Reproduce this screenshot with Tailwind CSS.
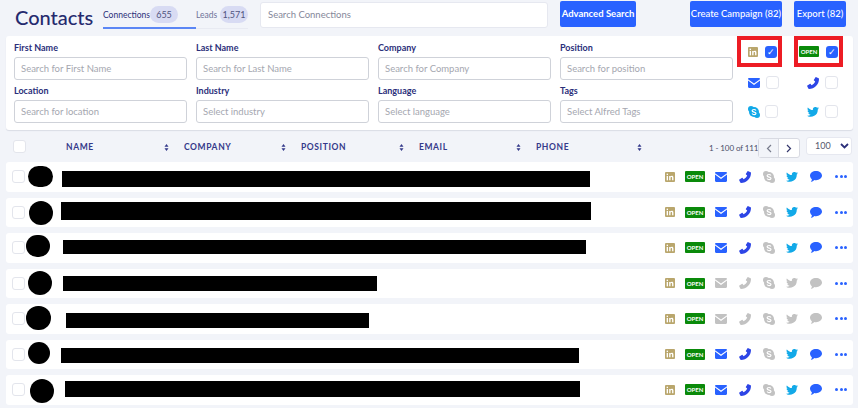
<!DOCTYPE html>
<html lang="en">
<head>
<meta charset="utf-8">
<script src="https://cdn.jsdelivr.net/npm/@tailwindcss/browser@4"></script>
<title>Contacts</title>
</head>
<body class="bg-[#f2f4f9] w-[858px] h-[408px] overflow-hidden font-['Lato',sans-serif] text-[#2b2f7a]">
<svg width="0" height="0" class="absolute">
  <defs>
    <symbol id="li" viewBox="0 0 12 12"><rect width="12" height="12" rx="1.2" fill="#b9a66c"/><rect x="2" y="4.7" width="1.6" height="5.3" fill="#fff"/><rect x="2" y="2" width="1.6" height="1.6" fill="#fff"/><path d="M5 4.7h1.5v.8c.4-.6 1-.9 1.7-.9 1.3 0 1.9.8 1.9 2.2V10H8.500V7.100c0-.7-.2-1.200-.9-1.200s-1 .5-1 1.200V10H5z" fill="#fff"/></symbol>
    <symbol id="mail" viewBox="0 0 12 10"><path d="M0 1.200C0 .5.500 0 1.200 0h9.600c.7 0 1.200.5 1.200 1.200L6 5.400z" fill="currentColor"/><path d="M0 2.600l6 4.300 6-4.300v6.200c0 .7-.5 1.200-1.200 1.200H1.200C.5 10 0 9.500 0 8.800z" fill="currentColor"/></symbol>
    <symbol id="phone" viewBox="0 0 12 12"><path d="M9.300.2l2.300 1.100c.3.2.4.4.4.7C12 7.500 7.500 12 2 12c-.3 0-.6-.1-.7-.4L.2 9.300c-.2-.4-.1-.7.2-.9l2.400-1.500c.3-.2.600-.1.800.1l1 1.200c1.600-.8 2.800-2.100 3.600-3.700l-1.200-1c-.2-.2-.3-.5-.1-.8L8.400.4c.2-.3.6-.4.9-.2z" fill="currentColor"/></symbol>
    <symbol id="skype" viewBox="0 0 12 12"><circle cx="6" cy="6" r="5" fill="currentColor"/><circle cx="3" cy="3" r="3" fill="currentColor"/><circle cx="9" cy="9" r="3" fill="currentColor"/><path d="M8 4.500C7.500 3.800 6.800 3.500 6 3.500c-1.100 0-1.900.5-1.900 1.300C4.100 6.500 8 5.600 8 7.300c0 .8-.8 1.300-1.900 1.300-.9 0-1.600-.4-2.100-1.100" fill="none" stroke="#fff" stroke-width="1.200"/></symbol>
    <symbol id="tw" viewBox="0 0 24 20"><path d="M24 2.400c-.9.400-1.800.7-2.800.8 1-.6 1.800-1.600 2.200-2.700-1 .6-2 1-3.100 1.200A4.900 4.900 0 0 0 11.900 6.200C7.800 6 4.200 4 1.700.9c-1.300 2.300-.6 5.100 1.500 6.600-.8 0-1.600-.2-2.200-.6 0 2.300 1.700 4.400 3.900 4.900-.7.200-1.500.2-2.200.1.600 2 2.400 3.400 4.600 3.400A9.900 9.900 0 0 1 0 17.300 13.900 13.900 0 0 0 21.500 5c1-.7 1.800-1.600 2.500-2.600z" fill="currentColor"/></symbol>
    <symbol id="chat" viewBox="0 0 12 11"><path d="M6 0c3.300 0 6 2 6 4.600S9.300 9.200 6 9.200c-.6 0-1.100-.1-1.600-.2C3.500 9.800 2.300 10.600.8 11c.6-.8 1-1.700 1.100-2.700C.7 7.400 0 6.100 0 4.600 0 2 2.700 0 6 0z" fill="currentColor"/></symbol>
    <symbol id="sort" viewBox="0 0 6 9"><path d="M3 0l2.600 3.500H.4zM3 9L.4 5.500h5.200z" fill="currentColor"/></symbol>
  </defs>
</svg>

<!-- Top bar -->
<header class="flex h-[36px] items-start">
  <h1 class="ml-[15px] mt-[3px] w-[88px] text-[20px] leading-[28px] font-medium text-[#252a6e]">Contacts</h1>
  <nav class="flex w-[145px] h-[29px] border-b border-[#e8eaf2]">
    <a class="mt-[6px] flex h-[23px] w-[93px] items-start border-b-2 border-[#5b86f5] text-[8.500px] text-[#2b2f7a]"><span class="w-[47px] whitespace-nowrap leading-[19px]">Connections</span><span class="flex h-[17px] w-[28px] items-center justify-center rounded-full bg-[#d8dbf3] text-[9px] text-[#50547f]">655</span></a>
    <a class="mt-[6px] flex h-[17px] items-start text-[8.500px] text-[#6f739a]"><span class="w-[24px] leading-[19px]">Leads</span><span class="flex h-[17px] w-[28px] items-center justify-center rounded-full bg-[#d8dbf3] text-[9px] text-[#50547f]">1,571</span></a>
  </nav>
  <div class="ml-[12px] mt-[2px] flex h-[26px] w-[288px] items-center rounded-[3px] border border-[#e6e8f0] bg-white pl-[7px] text-[9.500px] text-[#85889a]">Search Connections</div>
  <button class="ml-[12px] mt-[1px] h-[26px] w-[76px] whitespace-nowrap rounded-[2px] bg-[#2962ff] text-[9.500px] font-bold text-white">Advanced Search</button>
  <button class="ml-[54px] mt-[1px] h-[26px] w-[92px] whitespace-nowrap rounded-[2px] bg-[#2962ff] text-[9.500px] font-medium text-white">Create Campaign (82)</button>
  <button class="ml-[12px] mt-[1px] h-[26px] w-[52px] whitespace-nowrap rounded-[2px] bg-[#2962ff] text-[9.500px] font-medium text-white">Export (82)</button>
</header>

<!-- Filters -->
<section class="mx-[6px] flex h-[94px] w-[847px] rounded-[3px] bg-white shadow-[0_1px_1px_rgba(40,50,90,0.12)]">
  <div class="ml-[8px] mt-[5px] grid w-[719px] grid-cols-[173px_173px_173px_173px] content-start gap-x-[9px] gap-y-[4px]">
    <label class="block text-[9px] font-bold leading-[14px]">First Name<span class="mt-[2px] flex h-[23px] items-center rounded-[3px] border border-[#cfd2d9] pl-[6px] text-[9.500px] font-normal text-[#a5a7b0]">Search for First Name</span></label>
    <label class="block text-[9px] font-bold leading-[14px]">Last Name<span class="mt-[2px] flex h-[23px] items-center rounded-[3px] border border-[#cfd2d9] pl-[6px] text-[9.500px] font-normal text-[#a5a7b0]">Search for Last Name</span></label>
    <label class="block text-[9px] font-bold leading-[14px]">Company<span class="mt-[2px] flex h-[23px] items-center rounded-[3px] border border-[#cfd2d9] pl-[6px] text-[9.500px] font-normal text-[#a5a7b0]">Search for Company</span></label>
    <label class="block text-[9px] font-bold leading-[14px]">Position<span class="mt-[2px] flex h-[23px] items-center rounded-[3px] border border-[#cfd2d9] pl-[6px] text-[9.500px] font-normal text-[#a5a7b0]">Search for position</span></label>
    <label class="block text-[9px] font-bold leading-[14px]">Location<span class="mt-[2px] flex h-[23px] items-center rounded-[3px] border border-[#cfd2d9] pl-[6px] text-[9.500px] font-normal text-[#a5a7b0]">Search for location</span></label>
    <label class="block text-[9px] font-bold leading-[14px]">Industry<span class="mt-[2px] flex h-[23px] items-center rounded-[3px] border border-[#cfd2d9] pl-[6px] text-[9.500px] font-normal text-[#a5a7b0]">Select industry</span></label>
    <label class="block text-[9px] font-bold leading-[14px]">Language<span class="mt-[2px] flex h-[23px] items-center rounded-[3px] border border-[#cfd2d9] pl-[6px] text-[9.500px] font-normal text-[#a5a7b0]">Select language</span></label>
    <label class="block text-[9px] font-bold leading-[14px]">Tags<span class="mt-[2px] flex h-[23px] items-center rounded-[3px] border border-[#cfd2d9] pl-[6px] text-[9.500px] font-normal text-[#a5a7b0]">Select Alfred Tags</span></label>
  </div>
  <div class="ml-[4px] w-[106px]">
    <div class="flex h-[31px] gap-[12px]">
      <div class="flex h-[31px] w-[45px] items-center border-[4px] border-[#ed1c24] pl-[7px]">
        <svg class="h-[10px] w-[10px]"><use href="#li"/></svg>
        <span class="ml-[7px] flex h-[12px] w-[12px] items-center justify-center rounded-[3px] bg-[#2962ff] text-[9px] leading-none text-white">✓</span>
      </div>
      <div class="flex h-[31px] w-[49px] items-center border-[4px] border-[#ed1c24] pl-[1px]">
        <span class="flex h-[11px] w-[20px] items-center justify-center rounded-[1px] bg-[#0a8a0a] text-[6px] font-bold leading-[11px] text-white">OPEN</span>
        <span class="ml-[7px] flex h-[12px] w-[12px] items-center justify-center rounded-[3px] bg-[#2962ff] text-[9px] leading-none text-white">✓</span>
      </div>
    </div>
    <div class="mt-[9px] flex h-[13px] items-center">
      <svg class="ml-[11px] h-[10px] w-[12px] text-[#2962ff]"><use href="#mail"/></svg>
      <span class="ml-[6px] h-[13px] w-[13px] rounded-[3px] border border-[#e3e5ec]"></span>
      <svg class="ml-[28px] h-[12px] w-[12px] text-[#2d45e6]"><use href="#phone"/></svg>
      <span class="ml-[6px] h-[13px] w-[13px] rounded-[3px] border border-[#e3e5ec]"></span>
    </div>
    <div class="mt-[16px] flex h-[13px] items-center">
      <svg class="ml-[11px] h-[12px] w-[12px] text-[#12a9e8]"><use href="#skype"/></svg>
      <span class="ml-[5px] h-[13px] w-[13px] rounded-[3px] border border-[#e3e5ec]"></span>
      <svg class="ml-[29px] h-[10px] w-[12px] text-[#12a9e8]"><use href="#tw"/></svg>
      <span class="ml-[6px] h-[13px] w-[13px] rounded-[3px] border border-[#e3e5ec]"></span>
    </div>
  </div>
</section>

<!-- Table head -->
<div class="relative flex h-[32px] items-center text-[8.500px] font-bold tracking-[0.6px] text-[#34398a]">
  <span class="ml-[13px] h-[13px] w-[13px] rounded-[3px] border border-[#e3e5ec] bg-white"></span>
  <div class="ml-[40px] mt-[3px] flex w-[118px] items-center justify-between pr-[15px]"><span>NAME</span><svg class="h-[7px] w-[5px]"><use href="#sort"/></svg></div>
  <div class="mt-[3px] flex w-[117px] items-center justify-between pr-[15px]"><span>COMPANY</span><svg class="h-[7px] w-[5px]"><use href="#sort"/></svg></div>
  <div class="mt-[3px] flex w-[118px] items-center justify-between pr-[15px]"><span>POSITION</span><svg class="h-[7px] w-[5px]"><use href="#sort"/></svg></div>
  <div class="mt-[3px] flex w-[117px] items-center justify-between pr-[15px]"><span>EMAIL</span><svg class="h-[7px] w-[5px]"><use href="#sort"/></svg></div>
  <div class="mt-[3px] flex w-[106px] items-center justify-between"><span>PHONE</span><svg class="h-[7px] w-[5px]"><use href="#sort"/></svg></div>
  <span class="ml-[67px] mt-[3px] w-[49px] whitespace-nowrap text-[8px] font-normal tracking-[-0.1px] text-[#4a4d68]">1 - 100 of 111</span>
  <div class="mt-[4px] flex h-[20px] w-[42px] rounded-[3px] border border-[#d8dae2] bg-white">
    <span class="flex w-1/2 items-center justify-center border-r border-[#d8dae2] bg-[#f2f4f9]"><svg class="h-[9px] w-[6px]" viewBox="0 0 6 9" fill="none" stroke="#777b8c" stroke-width="1.2"><path d="M5 1L1.500 4.500 5 8"/></svg></span>
    <span class="flex w-1/2 items-center justify-center"><svg class="h-[9px] w-[6px]" viewBox="0 0 6 9" fill="none" stroke="#33366b" stroke-width="1.2"><path d="M1 1l3.500 3.500L1 8"/></svg></span>
  </div>
  <div class="ml-[6px] flex h-[18px] w-[46px] items-center justify-between rounded-[3px] border border-[#e6e8f0] bg-white pl-[8px] pr-[2px] text-[9px] font-normal tracking-normal text-[#55586e]">100<svg class="h-[6px] w-[9px]" viewBox="0 0 9 6" fill="none" stroke="#2b2f7a" stroke-width="1.800"><path d="M1 1l3.500 3.500L8 1"/></svg></div>
</div>

<!-- Rows -->
<main class="ml-[6px] w-[847px] space-y-[6px]">
  <div class="relative flex h-[29.500px] items-center rounded-[3px] bg-white">
    <span class="ml-[6px] h-[13px] w-[13px] rounded-[3px] border border-[#e3e5ec]"></span>
    <span class="absolute left-[22px] top-[4px] h-[21px] w-[25px] rounded-full bg-black"></span>
    <span class="absolute left-[56px] top-[9px] h-[16px] w-[528px] bg-black"></span>
    <div class="ml-auto mr-[6px] flex items-center"><svg class="h-[10px] w-[10px]"><use href="#li"/></svg><span class="ml-[10px] flex h-[11px] w-[20px] items-center justify-center rounded-[1px] bg-[#0a8a0a] text-[6px] font-bold leading-[11px] text-white">OPEN</span><svg class="ml-[10px] h-[10px] w-[12px] text-[#2962ff]"><use href="#mail"/></svg><svg class="ml-[12px] h-[12px] w-[12px] text-[#2d45e6]"><use href="#phone"/></svg><svg class="ml-[12px] h-[12px] w-[12px] text-[#c2c2c2]"><use href="#skype"/></svg><svg class="ml-[11px] h-[10px] w-[12px] text-[#12a9e8]"><use href="#tw"/></svg><svg class="ml-[12px] h-[11px] w-[12px] text-[#2962ff]"><use href="#chat"/></svg><span class="ml-[13px] flex w-[12px] justify-between"><i class="h-[3px] w-[3px] rounded-full bg-[#2962ff]"></i><i class="h-[3px] w-[3px] rounded-full bg-[#2962ff]"></i><i class="h-[3px] w-[3px] rounded-full bg-[#2962ff]"></i></span></div>
  </div>
  <div class="relative flex h-[29.500px] items-center rounded-[3px] bg-white">
    <span class="ml-[6px] h-[13px] w-[13px] rounded-[3px] border border-[#e3e5ec]"></span>
    <span class="absolute left-[23px] top-[3px] h-[24px] w-[24px] rounded-full bg-black"></span>
    <span class="absolute left-[55px] top-[4px] h-[18px] w-[530px] bg-black"></span>
    <div class="ml-auto mr-[6px] flex items-center"><svg class="h-[10px] w-[10px]"><use href="#li"/></svg><span class="ml-[10px] flex h-[11px] w-[20px] items-center justify-center rounded-[1px] bg-[#0a8a0a] text-[6px] font-bold leading-[11px] text-white">OPEN</span><svg class="ml-[10px] h-[10px] w-[12px] text-[#2962ff]"><use href="#mail"/></svg><svg class="ml-[12px] h-[12px] w-[12px] text-[#2d45e6]"><use href="#phone"/></svg><svg class="ml-[12px] h-[12px] w-[12px] text-[#c2c2c2]"><use href="#skype"/></svg><svg class="ml-[11px] h-[10px] w-[12px] text-[#12a9e8]"><use href="#tw"/></svg><svg class="ml-[12px] h-[11px] w-[12px] text-[#2962ff]"><use href="#chat"/></svg><span class="ml-[13px] flex w-[12px] justify-between"><i class="h-[3px] w-[3px] rounded-full bg-[#2962ff]"></i><i class="h-[3px] w-[3px] rounded-full bg-[#2962ff]"></i><i class="h-[3px] w-[3px] rounded-full bg-[#2962ff]"></i></span></div>
  </div>
  <div class="relative flex h-[29.500px] items-center rounded-[3px] bg-white">
    <span class="ml-[6px] h-[13px] w-[13px] rounded-[3px] border border-[#e3e5ec]"></span>
    <span class="absolute left-[20px] top-[2px] h-[22px] w-[24px] rounded-full bg-black"></span>
    <span class="absolute left-[57px] top-[7px] h-[14px] w-[523px] bg-black"></span>
    <div class="ml-auto mr-[6px] flex items-center"><svg class="h-[10px] w-[10px]"><use href="#li"/></svg><span class="ml-[10px] flex h-[11px] w-[20px] items-center justify-center rounded-[1px] bg-[#0a8a0a] text-[6px] font-bold leading-[11px] text-white">OPEN</span><svg class="ml-[10px] h-[10px] w-[12px] text-[#2962ff]"><use href="#mail"/></svg><svg class="ml-[12px] h-[12px] w-[12px] text-[#2d45e6]"><use href="#phone"/></svg><svg class="ml-[12px] h-[12px] w-[12px] text-[#c2c2c2]"><use href="#skype"/></svg><svg class="ml-[11px] h-[10px] w-[12px] text-[#12a9e8]"><use href="#tw"/></svg><svg class="ml-[12px] h-[11px] w-[12px] text-[#2962ff]"><use href="#chat"/></svg><span class="ml-[13px] flex w-[12px] justify-between"><i class="h-[3px] w-[3px] rounded-full bg-[#2962ff]"></i><i class="h-[3px] w-[3px] rounded-full bg-[#2962ff]"></i><i class="h-[3px] w-[3px] rounded-full bg-[#2962ff]"></i></span></div>
  </div>
  <div class="relative flex h-[29.500px] items-center rounded-[3px] bg-white">
    <span class="ml-[6px] h-[13px] w-[13px] rounded-[3px] border border-[#e3e5ec]"></span>
    <span class="absolute left-[22px] top-[2px] h-[24px] w-[24px] rounded-full bg-black"></span>
    <span class="absolute left-[57px] top-[7px] h-[15px] w-[314px] bg-black"></span>
    <div class="ml-auto mr-[6px] flex items-center"><svg class="h-[10px] w-[10px]"><use href="#li"/></svg><span class="ml-[10px] flex h-[11px] w-[20px] items-center justify-center rounded-[1px] bg-[#0a8a0a] text-[6px] font-bold leading-[11px] text-white">OPEN</span><svg class="ml-[10px] h-[10px] w-[12px] text-[#c2c2c2]"><use href="#mail"/></svg><svg class="ml-[12px] h-[12px] w-[12px] text-[#c2c2c2]"><use href="#phone"/></svg><svg class="ml-[12px] h-[12px] w-[12px] text-[#c2c2c2]"><use href="#skype"/></svg><svg class="ml-[11px] h-[10px] w-[12px] text-[#c2c2c2]"><use href="#tw"/></svg><svg class="ml-[12px] h-[11px] w-[12px] text-[#c2c2c2]"><use href="#chat"/></svg><span class="ml-[13px] flex w-[12px] justify-between"><i class="h-[3px] w-[3px] rounded-full bg-[#2962ff]"></i><i class="h-[3px] w-[3px] rounded-full bg-[#2962ff]"></i><i class="h-[3px] w-[3px] rounded-full bg-[#2962ff]"></i></span></div>
  </div>
  <div class="relative flex h-[29.500px] items-center rounded-[3px] bg-white">
    <span class="ml-[6px] h-[13px] w-[13px] rounded-[3px] border border-[#e3e5ec]"></span>
    <span class="absolute left-[20px] top-[2px] h-[24px] w-[25px] rounded-full bg-black"></span>
    <span class="absolute left-[60px] top-[9px] h-[15px] w-[303px] bg-black"></span>
    <div class="ml-auto mr-[6px] flex items-center"><svg class="h-[10px] w-[10px]"><use href="#li"/></svg><span class="ml-[10px] flex h-[11px] w-[20px] items-center justify-center rounded-[1px] bg-[#0a8a0a] text-[6px] font-bold leading-[11px] text-white">OPEN</span><svg class="ml-[10px] h-[10px] w-[12px] text-[#c2c2c2]"><use href="#mail"/></svg><svg class="ml-[12px] h-[12px] w-[12px] text-[#c2c2c2]"><use href="#phone"/></svg><svg class="ml-[12px] h-[12px] w-[12px] text-[#c2c2c2]"><use href="#skype"/></svg><svg class="ml-[11px] h-[10px] w-[12px] text-[#c2c2c2]"><use href="#tw"/></svg><svg class="ml-[12px] h-[11px] w-[12px] text-[#c2c2c2]"><use href="#chat"/></svg><span class="ml-[13px] flex w-[12px] justify-between"><i class="h-[3px] w-[3px] rounded-full bg-[#2962ff]"></i><i class="h-[3px] w-[3px] rounded-full bg-[#2962ff]"></i><i class="h-[3px] w-[3px] rounded-full bg-[#2962ff]"></i></span></div>
  </div>
  <div class="relative flex h-[29.500px] items-center rounded-[3px] bg-white">
    <span class="ml-[6px] h-[13px] w-[13px] rounded-[3px] border border-[#e3e5ec]"></span>
    <span class="absolute left-[22px] top-[2px] h-[22px] w-[22px] rounded-full bg-black"></span>
    <span class="absolute left-[55px] top-[8px] h-[15px] w-[518px] bg-black"></span>
    <div class="ml-auto mr-[6px] flex items-center"><svg class="h-[10px] w-[10px]"><use href="#li"/></svg><span class="ml-[10px] flex h-[11px] w-[20px] items-center justify-center rounded-[1px] bg-[#0a8a0a] text-[6px] font-bold leading-[11px] text-white">OPEN</span><svg class="ml-[10px] h-[10px] w-[12px] text-[#2962ff]"><use href="#mail"/></svg><svg class="ml-[12px] h-[12px] w-[12px] text-[#2d45e6]"><use href="#phone"/></svg><svg class="ml-[12px] h-[12px] w-[12px] text-[#c2c2c2]"><use href="#skype"/></svg><svg class="ml-[11px] h-[10px] w-[12px] text-[#12a9e8]"><use href="#tw"/></svg><svg class="ml-[12px] h-[11px] w-[12px] text-[#2962ff]"><use href="#chat"/></svg><span class="ml-[13px] flex w-[12px] justify-between"><i class="h-[3px] w-[3px] rounded-full bg-[#2962ff]"></i><i class="h-[3px] w-[3px] rounded-full bg-[#2962ff]"></i><i class="h-[3px] w-[3px] rounded-full bg-[#2962ff]"></i></span></div>
  </div>
  <div class="relative flex h-[29.500px] items-center rounded-[3px] bg-white">
    <span class="ml-[6px] h-[13px] w-[13px] rounded-[3px] border border-[#e3e5ec]"></span>
    <span class="absolute left-[24px] top-[4px] h-[24px] w-[24px] rounded-full bg-black"></span>
    <span class="absolute left-[59px] top-[6px] h-[16px] w-[515px] bg-black"></span>
    <div class="ml-auto mr-[6px] flex items-center"><svg class="h-[10px] w-[10px]"><use href="#li"/></svg><span class="ml-[10px] flex h-[11px] w-[20px] items-center justify-center rounded-[1px] bg-[#0a8a0a] text-[6px] font-bold leading-[11px] text-white">OPEN</span><svg class="ml-[10px] h-[10px] w-[12px] text-[#2962ff]"><use href="#mail"/></svg><svg class="ml-[12px] h-[12px] w-[12px] text-[#2d45e6]"><use href="#phone"/></svg><svg class="ml-[12px] h-[12px] w-[12px] text-[#c2c2c2]"><use href="#skype"/></svg><svg class="ml-[11px] h-[10px] w-[12px] text-[#12a9e8]"><use href="#tw"/></svg><svg class="ml-[12px] h-[11px] w-[12px] text-[#2962ff]"><use href="#chat"/></svg><span class="ml-[13px] flex w-[12px] justify-between"><i class="h-[3px] w-[3px] rounded-full bg-[#2962ff]"></i><i class="h-[3px] w-[3px] rounded-full bg-[#2962ff]"></i><i class="h-[3px] w-[3px] rounded-full bg-[#2962ff]"></i></span></div>
  </div>
</main>
</body>
</html>
